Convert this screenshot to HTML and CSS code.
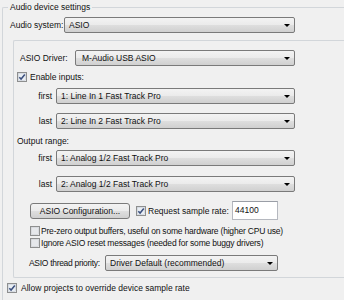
FILE: index.html
```html
<!DOCTYPE html>
<html lang="en">
<head>
    <meta charset="UTF-8">
    <title>Audio device settings</title>
    <link rel="stylesheet" href="styles.css">
</head>
<body>
    <fieldset class="group outer">
        <legend>Audio device settings</legend>
        <div class="row sysRow">
            <span class="lbl sysLbl">Audio system:</span>
            <div class="combo sysCombo"><span>ASIO</span><i class="arrow"></i></div>
        </div>

        <fieldset class="group inner">
            <div class="row driverRow">
                <span class="lbl driverLbl">ASIO Driver:</span>
                <div class="combo driverCombo"><span>M-Audio USB ASIO</span><i class="arrow"></i></div>
            </div>

            <label class="check enableRow">
                <svg class="box" viewBox="0 0 10 10"><rect x="0.5" y="0.5" width="9" height="9" fill="#fff" stroke="#8e8f8f"/><rect x="1.5" y="1.5" width="7" height="7" fill="#e9eef3" stroke="#c4cbd4" stroke-width="0.6"/><path d="M2.3 5.2 L4.1 7.1 L7.8 2.6" fill="none" stroke="#3b4f7e" stroke-width="1.5"/></svg>
                <span>Enable inputs:</span>
            </label>
            <div class="row rangeRow firstIn">
                <span class="lbl rangeLbl">first</span>
                <div class="combo rangeCombo"><span>1: Line In 1 Fast Track Pro</span><i class="arrow"></i></div>
            </div>
            <div class="row rangeRow lastIn">
                <span class="lbl rangeLbl">last</span>
                <div class="combo rangeCombo"><span>2: Line In 2 Fast Track Pro</span><i class="arrow"></i></div>
            </div>

            <div class="row outLbl">Output range:</div>
            <div class="row rangeRow firstOut">
                <span class="lbl rangeLbl">first</span>
                <div class="combo rangeCombo"><span>1: Analog 1/2 Fast Track Pro</span><i class="arrow"></i></div>
            </div>
            <div class="row rangeRow lastOut">
                <span class="lbl rangeLbl">last</span>
                <div class="combo rangeCombo"><span>2: Analog 1/2 Fast Track Pro</span><i class="arrow"></i></div>
            </div>

            <div class="row cfgRow">
                <div class="btn">ASIO Configuration...</div>
                <label class="check reqCheck">
                    <svg class="box" viewBox="0 0 10 10"><rect x="0.5" y="0.5" width="9" height="9" fill="#fff" stroke="#8e8f8f"/><rect x="1.5" y="1.5" width="7" height="7" fill="#e9eef3" stroke="#c4cbd4" stroke-width="0.6"/><path d="M2.3 5.2 L4.1 7.1 L7.8 2.6" fill="none" stroke="#3b4f7e" stroke-width="1.5"/></svg>
                    <span>Request sample rate:</span>
                </label>
                <div class="edit">44100</div>
            </div>

            <label class="check optRow preZero">
                <svg class="box" viewBox="0 0 10 10"><rect x="0.5" y="0.5" width="9" height="9" fill="#fff" stroke="#8e8f8f"/><rect x="1.5" y="1.5" width="7" height="7" fill="#e6e8eb" stroke="#c9ccd0" stroke-width="0.6"/></svg>
                <span>Pre-zero output buffers, useful on some hardware (higher CPU use)</span>
            </label>
            <label class="check optRow">
                <svg class="box" viewBox="0 0 10 10"><rect x="0.5" y="0.5" width="9" height="9" fill="#fff" stroke="#8e8f8f"/><rect x="1.5" y="1.5" width="7" height="7" fill="#e6e8eb" stroke="#c9ccd0" stroke-width="0.6"/></svg>
                <span>Ignore ASIO reset messages (needed for some buggy drivers)</span>
            </label>

            <div class="row prioRow">
                <span class="lbl prioLbl">ASIO thread priority:</span>
                <div class="combo prioCombo"><span>Driver Default (recommended)</span><i class="arrow"></i></div>
            </div>
        </fieldset>

        <label class="check allowRow">
            <svg class="box" viewBox="0 0 10 10"><rect x="0.5" y="0.5" width="9" height="9" fill="#fff" stroke="#8e8f8f"/><rect x="1.5" y="1.5" width="7" height="7" fill="#e9eef3" stroke="#c4cbd4" stroke-width="0.6"/><path d="M2.3 5.2 L4.1 7.1 L7.8 2.6" fill="none" stroke="#3b4f7e" stroke-width="1.5"/></svg>
            <span>Allow projects to override device sample rate</span>
        </label>
    </fieldset>
</body>
</html>
```

FILE: styles.css
```css
html,
body {
    margin: 0;
    padding: 0;
    width: 344px;
    height: 300px;
    overflow: hidden;
    background: #f0f0f0;
    font-family: "Liberation Sans", Arial, sans-serif;
    font-size: 8.5px;
    color: #111;
}

.group {
    margin: 0;
    padding: 0;
    border: 1px solid #d2d6da;
    border-right: none;
    min-width: 0;
    box-sizing: border-box;
}

.outer {
    margin: 1px 0 0 2px;
    width: 342px;
    height: 299px;
    border-bottom: none;
    border-radius: 2px 0 0 0;
}

.outer legend {
    margin-left: 5px;
    padding: 0 2px;
    line-height: 12px;
}

.inner {
    margin: 7px 0 0 10px;
    width: 331px;
    padding-bottom: 6px;
    border-radius: 2px 0 0 2px;
}

.row {
    display: flex;
    align-items: center;
}

.lbl {
    flex: none;
    white-space: nowrap;
}

.combo {
    position: relative;
    flex: none;
    height: 16px;
    box-sizing: border-box;
    border: 1px solid #7a7a7a;
    border-radius: 2px;
    background: linear-gradient(#f3f3f3 0%, #ebebeb 48%, #dedede 52%, #d0d0d0 100%);
    display: flex;
    align-items: center;
    padding-left: 4px;
    white-space: nowrap;
}

.combo .arrow {
    position: absolute;
    right: 4px;
    top: 6px;
    width: 0;
    height: 0;
    border-left: 3px solid transparent;
    border-right: 3px solid transparent;
    border-top: 3px solid #000;
}

.sysRow {
    margin: 4px 0 0 7px;
}

.sysLbl {
    width: 54px;
}

.sysCombo {
    width: 231px;
}

.driverRow {
    margin: 9px 0 0 6px;
}

.driverLbl {
    width: 55px;
}

.driverCombo {
    width: 220px;
    padding-left: 6px;
}

.check {
    display: flex;
    align-items: center;
    height: 12px;
    white-space: nowrap;
}

.check .box {
    width: 10px;
    height: 10px;
    flex: none;
}

.enableRow {
    margin: 5px 0 0 3px;
}

.enableRow span {
    margin-left: 3px;
}

.rangeLbl {
    width: 38px;
    text-align: right;
    padding-right: 4px;
}

.rangeCombo {
    width: 239px;
}

.firstIn {
    margin-top: 5px;
}

.lastIn {
    margin-top: 9px;
}

.outLbl {
    margin: 6px 0 0 3px;
    height: 12px;
}

.firstOut {
    margin-top: 3px;
}

.lastOut {
    margin-top: 10px;
}

.cfgRow {
    margin: 9px 0 0 16px;
    height: 19px;
}

.btn {
    width: 100px;
    height: 16px;
    box-sizing: border-box;
    border: 1px solid #7a7a7a;
    border-radius: 3px;
    background: linear-gradient(#f3f3f3 0%, #ebebeb 48%, #dedede 52%, #d0d0d0 100%);
    text-align: center;
    line-height: 14px;
}

.reqCheck {
    margin-left: 6px;
}

.reqCheck span {
    margin-left: 2px;
    width: 84px;
}

.edit {
    width: 46px;
    height: 19px;
    box-sizing: border-box;
    border: 1px solid #b5b8bf;
    border-top-color: #9a9ea6;
    background: #fff;
    padding-left: 2px;
    line-height: 17px;
}

.optRow {
    margin-left: 16px;
}

.optRow span {
    margin-left: 1px;
    letter-spacing: -0.2px;
}

.preZero {
    margin-top: 5px;
}

.prioRow {
    margin: 6px 0 0 15px;
}

.prioLbl {
    width: 76px;
    letter-spacing: -0.3px;
}

.prioCombo {
    width: 173px;
}

.allowRow {
    margin: 4px 0 0 4px;
}

.allowRow span {
    margin-left: 4px;
}
```
